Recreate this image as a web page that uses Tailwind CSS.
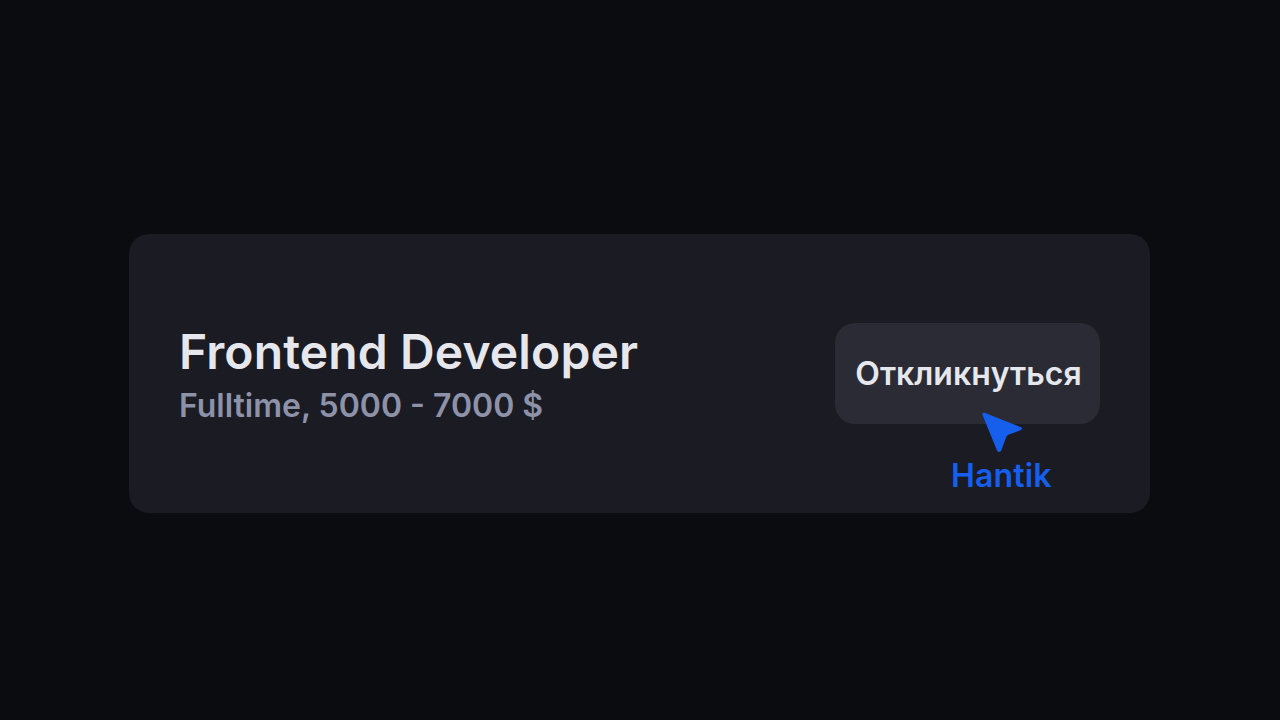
<!DOCTYPE html>
<html lang="en">
<head>
    <meta charset="UTF-8">
    <meta name="viewport" content="width=device-width, initial-scale=1.0">
    <title>Job card</title>
    <script src="https://cdn.jsdelivr.net/npm/@tailwindcss/browser@4"></script>
</head>
<body class="bg-[#0b0c10] h-screen overflow-hidden font-['Inter',sans-serif] antialiased">
    <div class="h-full pt-[234px] pl-[129px]">
        <div class="w-[1021px] h-[279px] bg-[#1a1b23] rounded-[20px] flex items-center justify-between pl-[50px] pr-[50px]">
            <div class="flex flex-col pt-[6px]">
                <h1 class="text-[48px] leading-[58px] font-semibold tracking-[0.12px] text-[#e6e7ec]">Frontend Developer</h1>
                <p class="text-[32px] leading-[50px] font-semibold text-[#8d92a9]">Fulltime, 5000 - 7000 $</p>
            </div>
            <div class="relative">
                <button class="w-[265px] h-[101px] pl-[2px] bg-[#2a2b34] rounded-[20px] text-[32px] font-semibold text-[#e6e7ec]">Откликнуться</button>
                <!-- Cursor with name tag -->
                <svg class="absolute left-[146px] top-[88px]" width="42" height="42" viewBox="0 0 42 42">
                    <path d="M3.5 1.8 L40 16.3 Q42 17.5 40 19 L28 23.5 Q26 24.3 25.2 26 L20.3 39.5 Q18 42.5 16 39.5 L1.5 4 Q1 1 3.5 1.8 Z" fill="#165eec"/>
                </svg>
                <span class="absolute left-[116px] top-[133px] text-[32px] leading-[39px] font-semibold tracking-[0.15px] text-[#165eec]">Hantik</span>
            </div>
        </div>
    </div>
</body>
</html>
